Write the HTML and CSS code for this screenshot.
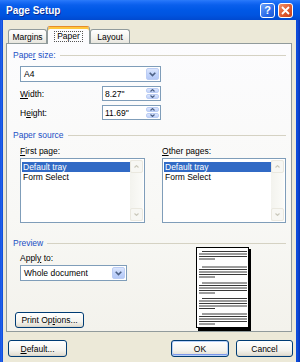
FILE: index.html
```html
<!DOCTYPE html>
<html>
<head>
<meta charset="utf-8">
<link rel="stylesheet" href="styles.css">
</head>
<body>
<div class="window">
  <div class="titlebar">
    <span class="title">Page Setup</span>
    <div class="tb-buttons">
      <span class="tb-btn help">?</span>
      <span class="tb-btn close"><svg width="9" height="9" viewBox="0 0 9 9"><path d="M1 1 L8 8 M8 1 L1 8" stroke="#fff" stroke-width="1.8" fill="none"/></svg></span>
    </div>
  </div>
  <div class="client">
    <div class="tabs">
      <div class="tab tab-margins">Margins</div>
      <div class="tab tab-paper active"><span class="focus">Paper</span></div>
      <div class="tab tab-layout">Layout</div>
    </div>
    <div class="panel">
      <section class="group">
        <div class="ghead"><span>Pape<u>r</u> size:</span></div>
        <div class="gbody size-body">
          <div class="combo combo-size"><span class="val">A4</span><span class="ddbtn"><svg width="7" height="5" viewBox="0 0 7 5"><path d="M0.7 0.7 L3.5 3.5 L6.3 0.7" stroke="#4D6185" stroke-width="1.6" fill="none"/></svg></span></div>
          <div class="spinrow"><span class="lbl"><u>W</u>idth:</span><div class="spin"><span class="val">8.27"</span><span class="spinbtns"><span class="sb"><svg width="5" height="3" viewBox="0 0 5 3"><path d="M0.5 2.5 L2.5 0.6 L4.5 2.5" stroke="#4D6185" stroke-width="1.2" fill="none"/></svg></span><span class="sb"><svg width="5" height="3" viewBox="0 0 5 3"><path d="M0.5 0.5 L2.5 2.4 L4.5 0.5" stroke="#4D6185" stroke-width="1.2" fill="none"/></svg></span></span></div></div>
          <div class="spinrow"><span class="lbl">H<u>e</u>ight:</span><div class="spin"><span class="val">11.69"</span><span class="spinbtns"><span class="sb"><svg width="5" height="3" viewBox="0 0 5 3"><path d="M0.5 2.5 L2.5 0.6 L4.5 2.5" stroke="#4D6185" stroke-width="1.2" fill="none"/></svg></span><span class="sb"><svg width="5" height="3" viewBox="0 0 5 3"><path d="M0.5 0.5 L2.5 2.4 L4.5 0.5" stroke="#4D6185" stroke-width="1.2" fill="none"/></svg></span></span></div></div>
        </div>
      </section>
      <section class="group source">
        <div class="ghead"><span>Paper source</span></div>
        <div class="gbody source-body">
          <div class="lcol">
            <span class="lbl"><u>F</u>irst page:</span>
            <div class="listbox">
              <div class="items"><div class="item sel">Default tray</div><div class="item">Form Select</div></div>
              <div class="vscroll"><span class="sarrow"><svg width="5" height="3" viewBox="0 0 5 3"><path d="M0.5 2.5 L2.5 0.6 L4.5 2.5" stroke="#C9C7BA" stroke-width="1.1" fill="none"/></svg></span><span class="sarrow"><svg width="5" height="3" viewBox="0 0 5 3"><path d="M0.5 0.5 L2.5 2.4 L4.5 0.5" stroke="#C9C7BA" stroke-width="1.1" fill="none"/></svg></span></div>
            </div>
          </div>
          <div class="lcol">
            <span class="lbl"><u>O</u>ther pages:</span>
            <div class="listbox">
              <div class="items"><div class="item sel">Default tray</div><div class="item">Form Select</div></div>
              <div class="vscroll"><span class="sarrow"><svg width="5" height="3" viewBox="0 0 5 3"><path d="M0.5 2.5 L2.5 0.6 L4.5 2.5" stroke="#C9C7BA" stroke-width="1.1" fill="none"/></svg></span><span class="sarrow"><svg width="5" height="3" viewBox="0 0 5 3"><path d="M0.5 0.5 L2.5 2.4 L4.5 0.5" stroke="#C9C7BA" stroke-width="1.1" fill="none"/></svg></span></div>
            </div>
          </div>
        </div>
      </section>
      <section class="group preview">
        <div class="ghead"><span>Preview</span></div>
        <div class="preview-body">
          <div class="pv-left">
            <div class="apply">
              <span class="lbl">Appl<u>y</u> to:</span>
              <div class="combo combo-apply"><span class="val">Whole document</span><span class="ddbtn"><svg width="7" height="5" viewBox="0 0 7 5"><path d="M0.7 0.7 L3.5 3.5 L6.3 0.7" stroke="#4D6185" stroke-width="1.6" fill="none"/></svg></span></div>
            </div>
            <button class="btn btn-print">Print Op<u>t</u>ions...</button>
          </div>
          <svg class="page" width="56" height="84" viewBox="0 0 56 84">
            <rect x="2" y="2" width="53" height="82" fill="#000"/>
            <rect x="0.5" y="0.5" width="52" height="80" fill="#fff" stroke="#000" stroke-width="1"/>
            <g stroke="#3a3a3a" stroke-width="1">
              <path d="M6 4.5 H51 M3 7 H51 M3 9.5 H51 M3 12 H19"/>
              <path d="M6 20 H51 M3 22.5 H51 M3 25 H51 M3 27.5 H51 M3 30 H19"/>
              <path d="M6 36 H51 M3 38.5 H51 M3 41 H51 M3 43.5 H51 M3 46 H19"/>
              <path d="M6 51.5 H51 M3 54 H51 M3 56.5 H51 M3 59 H51 M3 61.5 H19"/>
              <path d="M6 67 H51 M3 69.5 H51 M3 72 H51 M3 74.5 H51 M3 77 H19"/>
            </g>
          </svg>
        </div>
      </section>
    </div>
    <div class="footer">
      <button class="btn btn-default"><u>D</u>efault...</button>
      <button class="btn btn-ok">OK</button>
      <button class="btn btn-cancel">Cancel</button>
    </div>
  </div>
</div>
</body>
</html>
```

FILE: styles.css
```css
* { box-sizing: border-box; }
html, body { margin: 0; padding: 0; }
body {
  width: 300px;
  height: 362px;
  overflow: hidden;
  font-family: "Liberation Sans", Arial, sans-serif;
  font-size: 8.5px;
  color: #000;
  background: #0842D8;
}
u { text-decoration: underline; text-underline-offset: 1px; }

.window {
  width: 300px;
  height: 362px;
  display: flex;
  flex-direction: column;
  background: linear-gradient(90deg, #0A46D8 0, #2A6AF0 1px, #0846D6 3px, #0846D6 296px, #1050E0 297px, #0635B8 300px);
}

.titlebar {
  height: 20px;
  flex: none;
  display: flex;
  align-items: center;
  justify-content: space-between;
  padding: 0 7px 0 6px;
  background: linear-gradient(#2C7BFA 0, #1B6DF6 2px, #0A5FEC 5px, #0058E6 10px, #0054E0 15px, #0049D0 20px);
}
.title {
  color: #fff;
  font-weight: bold;
  font-size: 10px;
  text-shadow: 1px 1px 0 #0A2D96;
  padding-top: 1px;
}
.tb-buttons { display: flex; gap: 3px; }
.tb-btn {
  width: 15px;
  height: 15px;
  border: 1px solid #fff;
  border-radius: 3px;
  display: flex;
  align-items: center;
  justify-content: center;
}
.help {
  background: linear-gradient(135deg, #6EA2FA, #2A6BEA 60%, #1E58D2);
  color: #fff;
  font-weight: bold;
  font-size: 11px;
}
.close {
  background: linear-gradient(135deg, #F0906A, #E05A2E 55%, #C4401C);
}

.client {
  flex: 1;
  margin: 0 4px 0 3px;
  background: #ECE9D8;
  display: flex;
  flex-direction: column;
}

.tabs {
  height: 23px;
  flex: none;
  display: flex;
  align-items: flex-end;
  padding-left: 5px;
  position: relative;
  z-index: 1;
}
.tab {
  height: 14px;
  border: 1px solid #919B9C;
  border-bottom: none;
  border-radius: 3px 3px 0 0;
  background: linear-gradient(#FFFFFF, #F3F2EE 60%, #E8E6DE);
  display: flex;
  align-items: center;
  justify-content: center;
  padding-top: 1px;
}
.tab-margins { width: 39px; }
.tab-paper { width: 43px; }
.tab-layout { width: 40px; }
.tab.active {
  height: 18px;
  margin-bottom: -1px;
  background: #FCFCFE;
  border-top: 1px solid #E68B2C;
  box-shadow: inset 0 2px 0 #FFC73C;
  padding-top: 2px;
}
.focus {
  border: 1px dotted #555;
  padding: 0 2px;
  line-height: 9px;
}

.panel {
  height: 289px;
  flex: none;
  margin: 0 4px 0 3px;
  border: 1px solid #919B9C;
  background: linear-gradient(#FCFCFE, #F8F8F5 60%, #F3F2EC);
  padding: 6px 5px 0 6px;
}

.ghead {
  display: flex;
  align-items: center;
  height: 10px;
  line-height: 10px;
  color: #1B4FC4;
}
.ghead::after {
  content: "";
  flex: 1;
  border-top: 1px solid #D5D2C3;
  margin-left: 4px;
  margin-top: 1px;
}

.gbody { padding-left: 7px; }
.size-body {
  display: flex;
  flex-direction: column;
  gap: 4px;
  padding-top: 6px;
}

.combo {
  height: 16px;
  border: 1px solid #7F9DB9;
  background: #fff;
  display: flex;
  align-items: center;
  justify-content: space-between;
  padding: 1px;
}
.combo .val { padding-left: 2px; }
.combo-size { width: 141px; }
.combo-apply { width: 107px; }
.ddbtn {
  width: 13px;
  height: 100%;
  border: 1px solid #BCCDF4;
  border-radius: 2px;
  background: linear-gradient(#DCE6FD, #C2D4FB 50%, #B5C9F7);
  display: flex;
  align-items: center;
  justify-content: center;
}

.spinrow { display: flex; align-items: center; height: 15px; }
.lbl { line-height: 10px; height: 10px; display: block; }
.spinrow .lbl { width: 82px; }
.spin {
  width: 59px;
  height: 15px;
  border: 1px solid #7F9DB9;
  background: #fff;
  display: flex;
  align-items: center;
  justify-content: space-between;
  padding: 1px;
}
.spin .val { padding-left: 1px; }
.spinbtns {
  width: 13px;
  height: 100%;
  display: flex;
  flex-direction: column;
  gap: 1px;
}
.sb {
  flex: 1;
  border: 1px solid #BCCDF4;
  border-radius: 2px;
  background: linear-gradient(#DCE6FD, #C0D2FA);
  display: flex;
  align-items: center;
  justify-content: center;
}

.source { margin-top: 10px; }
.source-body {
  display: grid;
  grid-template-columns: 125px 124px;
  column-gap: 17px;
  padding-top: 6px;
}
.lcol { display: flex; flex-direction: column; gap: 2px; }
.listbox {
  height: 65px;
  border: 1px solid #7F9DB9;
  background: #fff;
  display: flex;
  padding: 1px;
}
.items { flex: 1; padding-top: 2px; }
.item { height: 10px; line-height: 10px; padding-left: 1px; }
.item.sel { background: #316AC5; color: #fff; }
.vscroll {
  width: 13px;
  background: linear-gradient(90deg, #F3F3EE, #FBFBF8);
  display: flex;
  flex-direction: column;
  justify-content: space-between;
}
.sarrow {
  height: 13px;
  border: 1px solid #EAE8DF;
  border-radius: 2px;
  background: #F7F7F3;
  display: flex;
  align-items: center;
  justify-content: center;
}

.preview { margin-top: 15px; }
.preview-body {
  display: grid;
  grid-template-columns: 183px 56px;
}
.pv-left { display: flex; flex-direction: column; }
.apply {
  padding: 5px 0 0 7px;
  display: flex;
  flex-direction: column;
  gap: 2px;
}
.page { display: block; margin-top: -1px; }

.btn {
  font-family: inherit;
  font-size: 8.5px;
  color: #000;
  height: 17px;
  border: 1px solid #003C74;
  border-radius: 3px;
  background: linear-gradient(#FFFFFF, #F5F4EF 60%, #E4E1D6 90%, #D6D0C5);
  padding: 0;
  display: flex;
  align-items: center;
  justify-content: center;
}
.btn-print {
  width: 69px;
  height: 16px;
  margin: auto 0 3px 2px;
}

.footer {
  display: flex;
  align-items: flex-start;
  padding: 8px 3px 0 5px;
}
.btn-default { width: 59px; }
.btn-ok {
  width: 58px;
  margin-left: auto;
  box-shadow: inset 0 0 0 1px #B8D0F8, inset 0 -1px 0 1px #7A96E8;
}
.btn-cancel { width: 57px; margin-left: 7px; }
```
